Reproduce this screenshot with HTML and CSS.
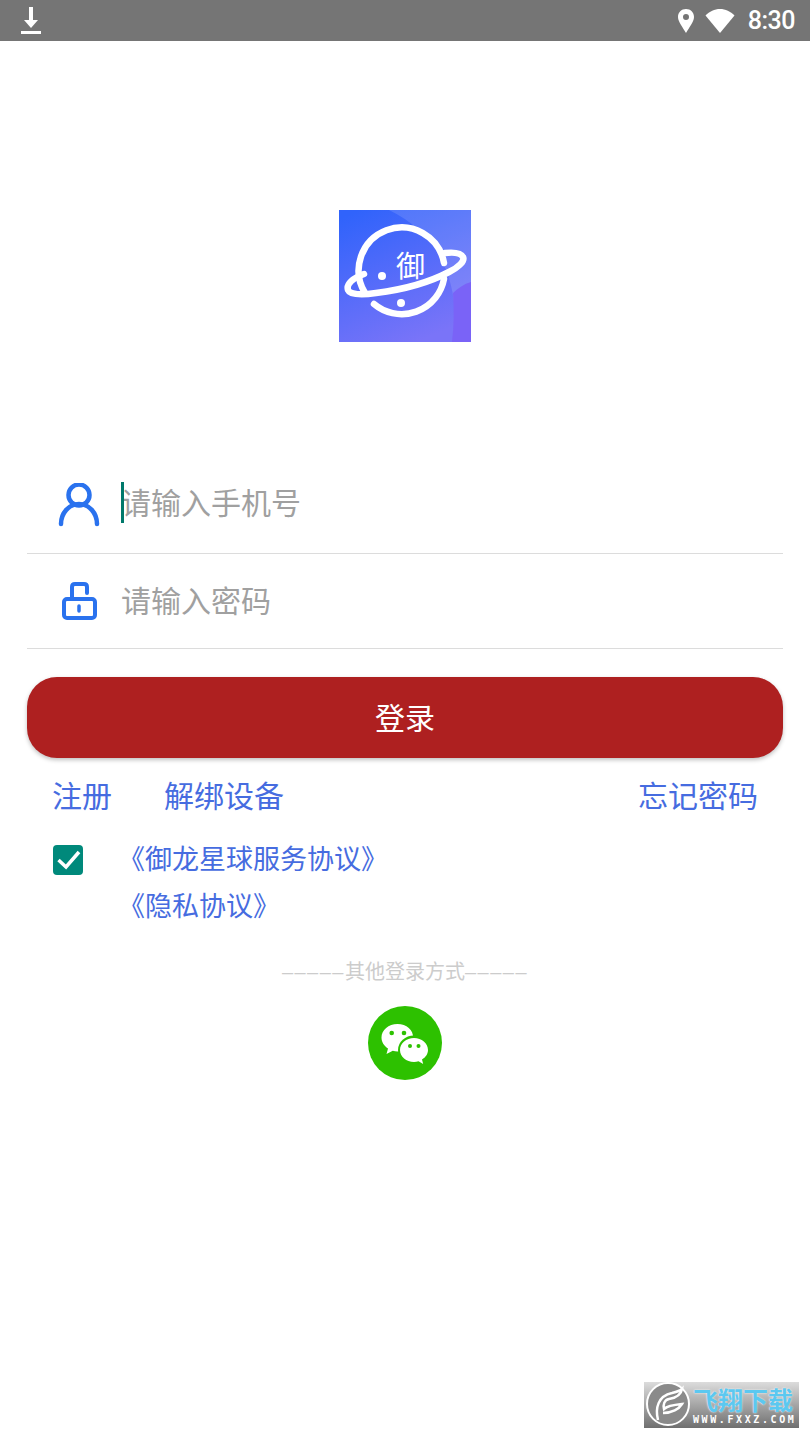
FILE: index.html
```html
<!DOCTYPE html>
<html lang="zh-CN">
<head>
    <meta charset="UTF-8">
    <meta name="viewport" content="width=device-width, initial-scale=1.0">
    <title>登录</title>
    <link rel="stylesheet" href="styles.css">
</head>
<body>
    <div class="status-bar">
        <svg class="status-download" width="24" height="30" viewBox="0 0 24 30">
            <path d="M10 1h4v13h5l-7 8-7-8h5z" fill="#fff"/>
            <rect x="2" y="25" width="20" height="3" fill="#fff"/>
        </svg>
        <div class="status-right">
            <svg width="18" height="26" viewBox="0 0 18 26">
                <path fill-rule="evenodd" d="M9 1C4.400 1 1 4.500 1 9c0 5 5 10.500 8 16 3-5.500 8-11 8-16 0-4.500-3.400-8-8-8zm0 5a3 3 0 1 1 0 6 3 3 0 0 1 0-6z" fill="#fff"/>
            </svg>
            <svg width="30" height="26" viewBox="0 0 30 26">
                <path d="M0.500 7.500C4.500 3.500 9.500 1 15 1s10.500 2.500 14.500 6.500L15 25z" fill="#fff"/>
            </svg>
            <span class="status-time">8:30</span>
        </div>
    </div>

    <div class="logo-wrap">
        <svg class="logo" width="132" height="132" viewBox="0 0 132 132">
            <defs>
                <linearGradient id="logoBg" x1="0.15" y1="0" x2="0.6" y2="1">
                    <stop offset="0" stop-color="#3063fb"/>
                    <stop offset="1" stop-color="#7a74f8"/>
                </linearGradient>
            </defs>
            <rect width="132" height="132" fill="url(#logoBg)"/>
            <path d="M50 0h82v132h-18c8-50-8-105-64-132z" fill="#fff" opacity="0.13"/>
            <path d="M113 132c2-16 2-32 1-49 5-5 11-9 18-11v60z" fill="#7a63f7"/>
            <g fill="none" stroke="#fff" stroke-width="6.500" stroke-linecap="round">
                <path d="M26 83A43 43 0 1 1 105 53"/>
                <path d="M35 94A43 43 0 0 0 105 69"/>
                <path d="M25 64C14 68 7 74 9 80c2 5 14 5 28 3 24-3 52-10 73-21 10-5 16-11 14-15-2-4-9-5-18-4"/>
            </g>
            <circle cx="43" cy="66" r="4" fill="#fff"/>
            <circle cx="62" cy="93" r="4" fill="#fff"/>
            <text x="57" y="67" class="logo-char">御</text>
        </svg>
    </div>

    <form class="login-form">
        <div class="input-row">
            <svg class="input-icon" width="44" height="46" viewBox="0 0 44 46">
                <circle cx="23" cy="12" r="10.500" fill="none" stroke="#2a72ee" stroke-width="4.500"/>
                <path d="M5 41c0-11 8-20 18-20s18 9 18 20" fill="none" stroke="#2a72ee" stroke-width="4.500" stroke-linecap="round"/>
            </svg>
            <div class="input-text phone-text"><span class="caret"></span>请输入手机号</div>
        </div>
        <div class="input-row">
            <svg class="input-icon" width="44" height="46" viewBox="0 0 44 46">
                <rect x="8" y="21" width="31" height="19" rx="3" fill="none" stroke="#2a72ee" stroke-width="4"/>
                <path d="M16 21V9c0-2 1-3 3-3h9c2 0 3 1 3 3v6" fill="none" stroke="#2a72ee" stroke-width="4" stroke-linecap="round"/>
                <path d="M23 28v5" stroke="#2a72ee" stroke-width="3.500" stroke-linecap="round"/>
            </svg>
            <div class="input-text password-text">请输入密码</div>
        </div>
        <button type="button" class="login-button">登录</button>
    </form>

    <div class="link-row">
        <a class="link">注册</a>
        <a class="link unbind">解绑设备</a>
        <a class="link forgot">忘记密码</a>
    </div>

    <div class="agree-row">
        <span class="checkbox">
            <svg width="30" height="30" viewBox="0 0 30 30">
                <path d="M5.500 15l7.500 7 13-15" fill="none" stroke="#fff" stroke-width="3.500"/>
            </svg>
        </span>
        <div class="agree-links">
            <a class="agree-link">《御龙星球服务协议》</a>
            <a class="agree-link">《隐私协议》</a>
        </div>
    </div>

    <div class="other-title"><span class="dashes">–––––</span>其他登录方式<span class="dashes">–––––</span></div>
    <div class="wechat-wrap">
        <svg width="74" height="74" viewBox="0 0 74 74">
            <circle cx="37" cy="37" r="37" fill="#2dc100"/>
            <path d="M29.500 18C20.500 18 13.500 24 13.500 31.500c0 4.500 2.500 8.500 6.500 11l-1.500 5.500 6.300-3.200c1.500.4 3 .6 4.700.6 8.800 0 15.500-6 15.500-13.900C45.500 24 38.500 18 29.500 18z" fill="#fff"/>
            <ellipse cx="46" cy="44" rx="16" ry="14.500" fill="#2dc100"/>
            <path d="M60 44c0-6.800-6.300-12-14-12s-14 5.200-14 12 6.300 12 14 12c1.600 0 3.100-.2 4.500-.7l4.700 2.700-1.200-4.500C57.600 51.300 60 47.900 60 44z" fill="#fff"/>
            <circle cx="23.700" cy="27" r="2.300" fill="#2dc100"/>
            <circle cx="36" cy="27" r="2.300" fill="#2dc100"/>
            <circle cx="42" cy="40" r="2" fill="#2dc100"/>
            <circle cx="50.500" cy="40" r="2" fill="#2dc100"/>
        </svg>
    </div>

    <div class="watermark">
        <svg class="watermark-icon" width="46" height="44" viewBox="0 0 46 44">
            <circle cx="24" cy="22" r="21" fill="#8a8a8a" stroke="#fff" stroke-width="2"/>
            <path d="M14 38c-3-12 0-24 14-27 4-1 8-2 10-4-1 6-7 9-13 10-5 1-6 6-5 10 3-3 8-4 18-5-3 5-10 9-19 9" fill="none" stroke="#fff" stroke-width="2.500"/>
        </svg>
        <div class="watermark-text">
            <span class="watermark-title">飞翔下载</span>
            <span class="watermark-url">WWW.FXXZ.COM</span>
        </div>
    </div>
</body>
</html>
```

FILE: styles.css
```css
body {
    margin: 0;
    padding: 0;
    width: 810px;
    height: 1440px;
    position: relative;
    overflow: hidden;
    background-color: #ffffff;
    font-family: "Noto Sans CJK SC", "Noto Sans", sans-serif;
}
a {
    text-decoration: none;
}
.status-bar {
    height: 41px;
    background-color: #757575;
    display: flex;
    align-items: center;
    justify-content: space-between;
    padding: 0 15px 0 19px;
}
.status-download {
    display: block;
}
.status-right {
    display: flex;
    align-items: center;
    gap: 10px;
}
.status-right svg {
    display: block;
}
.status-time {
    font-family: Roboto, sans-serif;
    font-size: 25px;
    font-weight: 500;
    letter-spacing: -0.5px;
    color: white;
    line-height: 41px;
    margin-left: 3px;
}
.logo-wrap {
    display: flex;
    justify-content: center;
    padding-top: 169px;
}
.logo {
    display: block;
}
.logo-char {
    font-size: 29px;
    fill: white;
}
.login-form {
    display: flex;
    flex-direction: column;
    padding: 0 27px;
    margin-top: 116px;
}
.input-row {
    height: 95px;
    box-sizing: border-box;
    display: flex;
    align-items: center;
    border-bottom: 1px solid #dcdcdc;
    padding-left: 29px;
}
.input-row:first-child {
    height: 96px;
}
.input-icon {
    display: block;
    flex-shrink: 0;
}
.input-text {
    margin-left: 21px;
    font-size: 30px;
    color: #a0a0a0;
    position: relative;
}
.phone-text {
    margin-bottom: 10px;
}
.password-text {
    margin-bottom: 4px;
}
.caret {
    position: absolute;
    left: 0;
    top: 3px;
    width: 3px;
    height: 41px;
    background-color: #00796b;
}
.login-button {
    margin-top: 28px;
    height: 81px;
    padding: 0 0 4px;
    border: none;
    border-radius: 30px;
    background-color: #ae2020;
    color: white;
    font-family: inherit;
    font-size: 30px;
    box-shadow: 0 2px 4px rgba(0, 0, 0, 0.25);
}
.link-row {
    display: flex;
    padding: 14px 52px 0;
}
.link {
    font-size: 30px;
    line-height: 44px;
    color: #466ce0;
}
.unbind {
    margin-left: 52px;
}
.forgot {
    margin-left: auto;
}
.agree-row {
    display: flex;
    padding: 18px 53px 0;
}
.checkbox {
    width: 30px;
    height: 30px;
    margin-top: 11px;
    border-radius: 4px;
    background-color: #00897b;
    display: block;
    flex-shrink: 0;
}
.checkbox svg {
    display: block;
}
.agree-links {
    margin-left: 35px;
    display: flex;
    flex-direction: column;
}
.agree-link {
    font-size: 27px;
    line-height: 47px;
    color: #466ce0;
}
.other-title {
    margin-top: 28px;
    height: 30px;
    text-align: center;
    font-size: 20px;
    line-height: 30px;
    color: #cccccc;
}
.dashes {
    font-family: "Liberation Sans", sans-serif;
    letter-spacing: 1.500px;
}
.wechat-wrap {
    display: flex;
    justify-content: center;
    margin-top: 20px;
}
.wechat-wrap svg {
    display: block;
}
.watermark {
    position: absolute;
    left: 644px;
    top: 1382px;
    width: 155px;
    height: 46px;
    display: flex;
    background: linear-gradient(#dcdcdc, #6f6f6f);
}
.watermark-text {
    display: flex;
    flex-direction: column;
    align-items: flex-start;
    margin-left: 3px;
    padding-top: 4px;
}
.watermark-title {
    font-size: 25px;
    line-height: 26px;
    font-weight: 700;
    color: #5cc8f0;
    text-shadow: 0 0 2px #ffffff;
}
.watermark-url {
    font-family: "DejaVu Sans Mono", monospace;
    font-size: 10px;
    line-height: 12px;
    font-weight: 700;
    letter-spacing: 2.600px;
    color: #ffffff;
    margin-top: 2px;
}
```
